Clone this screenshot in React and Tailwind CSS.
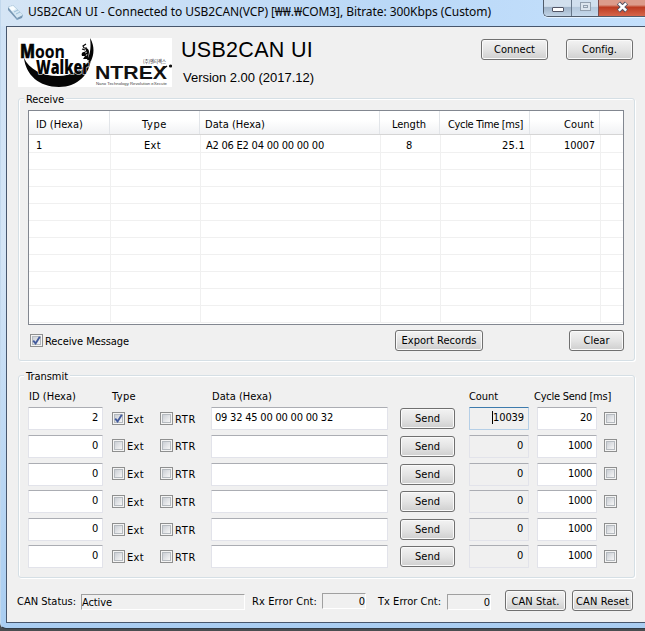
import { useLayoutEffect, useRef, useState } from "react";

// Text whose tracking is computed so that it spans `w` pixels.
function Fit({ w, children, className = "" }) {
  const ref = useRef(null);
  const [tracking, setTracking] = useState(0);
  useLayoutEffect(() => {
    const natural = ref.current.getBoundingClientRect().width;
    setTracking((w - natural) / Math.max(1, children.length));
  }, []);
  return (
    <span ref={ref} className={`inline-block whitespace-pre ${className}`} style={{ letterSpacing: `${tracking}px` }}>
      {children}
    </span>
  );
}

function Button({ label, w, className }) {
  return (
    <button
      className={`flex h-[21px] shrink-0 items-center justify-center rounded-[3px] border border-[#707070] bg-linear-to-b from-[#f3f3f3] from-0% via-[#e4e4e4] via-50% to-[#cfcfcf] to-100% pt-[2px] shadow-[inset_0_0_0_1px_#fafafa] ${className}`}
    >
      <Fit w={w}>{label}</Fit>
    </button>
  );
}

function Check({ checked = false, className = "" }) {
  return (
    <span className={`flex size-[13px] shrink-0 items-center justify-center border border-[#8e8f8f] bg-[#f4f4f4] ${className}`}>
      <span className="block size-[9px] border border-[#b5babf] bg-linear-to-br from-[#cbcfd5] to-[#f6f6f6]">
        {checked && (
          <svg viewBox="0 0 9 9" className="-mt-px -ml-px size-[9px]">
            <path d="M1.2 4.6 3.6 7.4 7.8.8" fill="none" stroke="#425a9c" strokeWidth="1.9" />
          </svg>
        )}
      </span>
    </span>
  );
}

function Field({ value = "", w = 0, className }) {
  return (
    <span className={`block h-[23px] shrink-0 rounded-[1px] border border-[#e2e3ea] border-t-[#abadb3] leading-[20px] ${className}`}>
      {value && <Fit w={w}>{value}</Fit>}
    </span>
  );
}

function Group({ title, w, className, children }) {
  return (
    <section className={`ml-[11px] w-[617px] rounded-[3px] border border-[#d5dfe5] shadow-[inset_1px_1px_0_#fff,1px_1px_0_#fff] ${className}`}>
      <div className="-mt-[8px] ml-[5px] h-[15px] w-fit bg-[#f0f0f0] pr-[2px] pl-[2px] leading-[17px]">
        <Fit w={w}>{title}</Fit>
      </div>
      {children}
    </section>
  );
}

function Logo() {
  return (
    <svg className="ml-[11px] h-[49px] w-[154px] shrink-0 bg-white" viewBox="0 0 154 49">
      <path d="M6 20C11 31 24 38 40 38 54 38 66 31 73 20 72 36 60 49 41 49 21 49 8 37 6 20Z" fill="#050505" />
      <path d="M72 0C77 8 76 17 73 23L69 22C73 15 73 7 72 0Z" fill="#050505" />
      <path d="M67 10c3 0 4 2 4 4l-1 7-5 0 2-3-3 0c-1-2 0-4 2-4l2-1Z" fill="#050505" />
      <path d="M68 6l-3 2 1 2 3 0M64 11l3 1" fill="none" stroke="#050505" strokeWidth="1.2" />
      <path d="M67 15l2-1M68 18l1-2" fill="none" stroke="#fff" strokeWidth=".7" />
      <g fontFamily="Open Sans, sans-serif" fontWeight="800" fill="#050505">
        <text x="2" y="20" fontSize="19" textLength="15" lengthAdjust="spacingAndGlyphs" stroke="#050505" strokeWidth=".5">M</text>
        <text x="17" y="20" fontSize="17" fontWeight="700" textLength="30" lengthAdjust="spacingAndGlyphs">oon</text>
        <text x="18" y="35.500" fontSize="19" stroke="#fff" strokeWidth="1.200" paintOrder="stroke" textLength="53" lengthAdjust="spacingAndGlyphs">Walker</text>
      </g>
      <text x="77" y="41" fontSize="18.500" fontFamily="Liberation Sans, sans-serif" fontWeight="700" fill="#111" textLength="72" lengthAdjust="spacingAndGlyphs">NTREX</text>
      <circle cx="152.500" cy="28" r="1.600" fill="#111" />
      <path d="M145 31 149 28" stroke="#111" strokeWidth="1.500" />
      <text x="125" y="25" fontSize="5" fontFamily="Noto Sans CJK KR, sans-serif" fill="#222" textLength="23" lengthAdjust="spacingAndGlyphs">(주)엔티렉스</text>
      <text x="78" y="46.500" fontSize="3.800" fontFamily="Liberation Sans, sans-serif" fill="#444" textLength="71" lengthAdjust="spacingAndGlyphs">Nano Technology Revolution eXecute</text>
    </svg>
  );
}

function TitleBar() {
  return (
    <header className="flex h-[26px] shrink-0 bg-linear-to-r from-[#d5e5f5] via-[#bad8f7] via-60% to-[#c4e0fc]">
      <svg className="mt-[4px] ml-[6px] size-[17px] shrink-0" viewBox="0 0 17 17">
        <path d="M1 3 6 1 16 11 15 14 10 16 1 6Z" fill="#7797b3" />
        <path d="M1 3 6 1 16 11 10 14Z" fill="#d5e7f3" />
        <path d="M2 3.500 6 2 9 5 5 7Z" fill="#f9fdff" />
        <path d="M10 14v2M7 8l4-2M9 10l4-2" stroke="#8eb5d1" strokeWidth=".8" />
      </svg>
      <h1 className="ml-[4px] h-[24px] w-[465px] shrink-0 font-['Noto_Sans','Noto_Sans_CJK_KR',sans-serif] text-[12px] leading-[23px] text-[#080808]">
        <Fit w={463}>{"USB2CAN UI - Connected to USB2CAN(VCP) [₩₩.₩COM3], Bitrate: 300Kbps (Custom)"}</Fit>
      </h1>
      <div className="ml-[50px] flex h-[17px] w-[110px] shrink-0 overflow-hidden rounded-bl-[5px] border-b border-l border-[#505c6b] shadow-[0_1px_0_#e5f2ff]">
        <span className="flex w-[28px] items-end justify-center border-r border-[#66778a] bg-linear-to-b from-[#d1dfed] from-40% via-[#9fb3c8] via-45% to-[#c1d3e5] pb-[4px]">
          <i className="block h-[5px] w-[12px] rounded-[1px] border border-[#535666] bg-white" />
        </span>
        <span className="flex w-[27px] items-center justify-center border-r border-[#7a4a4c] bg-linear-to-b from-[#d0dfee] from-40% via-[#b4c8dc] via-45% to-[#c6d9ec]">
          <i className="-mt-[3px] block h-[9px] w-[11px] border border-[#929fae] bg-[#dce5ee] p-[2px]">
            <i className="block h-[3px] w-[5px] border border-[#929fae]" />
          </i>
        </span>
        <span className="flex w-[54px] justify-center bg-linear-to-b from-[#dc9b8b] from-30% via-[#bc3a20] via-45% to-[#d6664b] pr-[7px]">
          <svg className="mt-[1px] h-[12px] w-[13px]" viewBox="0 0 13 12">
            <path d="M2.500 2 10.500 10M10.500 2 2.500 10" stroke="#535666" strokeWidth="4.500" />
            <path d="M2.800 2.300 10.200 9.700M10.200 2.300 2.800 9.700" stroke="#fff" strokeWidth="2.500" />
          </svg>
        </span>
      </div>
    </header>
  );
}

const emptyRows = Array.from({ length: 10 }, (_, i) => i);
const headCols = "grid grid-cols-[81px_90px_180px_60px_90px_70px_1fr]";
const cols = "grid grid-cols-[82px_90px_180px_60px_90px_70px_1fr] grid-rows-[100%]";

function ReceiveTable() {
  const headCell = "h-[23px] border-r border-[#e2e5e9]";
  const cell = "border-r border-b border-[#f0f0f0]";
  return (
    <div className="mt-[4px] ml-[9px] h-[215px] w-[596px] overflow-hidden border border-[#828790] bg-white">
      <div className={`h-[24px] border-b border-[#d5d5d5] bg-linear-to-b from-white from-40% to-[#f1f2f4] leading-[28px] ${headCols}`}>
        <span className={`${headCell} pl-[7px]`}><Fit w={47}>ID (Hexa)</Fit></span>
        <span className={`${headCell} pl-[32px]`}><Fit w={25}>Type</Fit></span>
        <span className={`${headCell} pl-[5px]`}><Fit w={60}>Data (Hexa)</Fit></span>
        <span className={`${headCell} pl-[12px]`}><Fit w={34}>Length</Fit></span>
        <span className={`${headCell} pl-[8px]`}><Fit w={75}>Cycle Time [ms]</Fit></span>
        <span className={`${headCell} pl-[34px]`}><Fit w={30}>Count</Fit></span>
        <span />
      </div>
      <div className={`h-[18px] leading-[22px] ${cols}`}>
        <span className={`${cell} pl-[7px]`}>1</span>
        <span className={`${cell} pl-[33px]`}><Fit w={17}>Ext</Fit></span>
        <span className={`${cell} pl-[5px]`}><Fit w={118}>A2 06 E2 04 00 00 00 00</Fit></span>
        <span className={`${cell} pl-[25px]`}>8</span>
        <span className={`${cell} pl-[61px]`}><Fit w={23}>25.1</Fit></span>
        <span className={`${cell} pl-[33px]`}><Fit w={31}>10007</Fit></span>
        <span className="border-b border-[#f0f0f0]" />
      </div>
      {emptyRows.map((i) => (
        <div key={i} className={`h-[17px] ${cols}`}>
          <span className={cell} /><span className={cell} /><span className={cell} />
          <span className={cell} /><span className={cell} /><span className={cell} />
          <span className="border-b border-[#f0f0f0]" />
        </div>
      ))}
    </div>
  );
}

const rows = [
  { id: "2", ext: true, data: "09 32 45 00 00 00 00 32", count: "10039", cycle: "20", height: "h-[28px]" },
  { id: "0", count: "0", cycle: "1000", height: "h-[28px]" },
  { id: "0", count: "0", cycle: "1000", height: "h-[27px]" },
  { id: "0", count: "0", cycle: "1000", height: "h-[28px]" },
  { id: "0", count: "0", cycle: "1000", height: "h-[27px]" },
  { id: "0", count: "0", cycle: "1000", height: "h-[27px]" },
];

function TransmitRow({ row, index }) {
  const checkTop = index === 0 || index > 2;
  return (
    <div className={`flex items-start pl-[9px] ${row.height}`}>
      <Field value={row.id} w={7} className="w-[75px] bg-white pr-[3px] text-right" />
      <div className={`ml-[9px] flex items-center ${checkTop ? "mt-[5px]" : "mt-[4px]"}`}>
        <Check checked={row.ext} />
        <span className="ml-[2px] h-[13px] w-[33px] leading-[16px]"><Fit w={17}>Ext</Fit></span>
        <Check />
        <span className="ml-[2px] h-[13px] w-[36px] leading-[16px]"><Fit w={21}>RTR</Fit></span>
      </div>
      <Field value={row.data} w={118} className="w-[177px] bg-white pl-[3px]" />
      <Button label="Send" w={25} className="mt-px ml-[12px] w-[55px]" />
      <Field
        value={row.count}
        w={row.count.length * 6 + 1}
        className={`ml-[14px] w-[60px] pr-[4px] text-right ${index === 0 ? "border-[#b5cfe7]! border-t-[#3d7bad]! [&>span]:shadow-[-1px_0_0_#000] [&>span]:h-[13px] [&>span]:leading-[13px] [&>span]:mt-[3px]" : ""}`}
      />
      <Field value={row.cycle} w={row.cycle.length * 6} className="ml-[8px] w-[60px] bg-white pr-[4px] text-right" />
      <Check className={checkTop ? "mt-[5px] ml-[7px]" : "mt-[4px] ml-[7px]"} />
    </div>
  );
}

function StatusField({ children, className }) {
  return (
    <span className={`block h-[16px] border border-white border-t-[#a0a0a0] border-l-[#a0a0a0] leading-[16px] ${className}`}>
      {children}
    </span>
  );
}

export default function App() {
  return (
    <div className="h-[631px] w-[645px] overflow-hidden bg-[#4a4d50] font-['DejaVu_Sans_Condensed','DejaVu_Sans',sans-serif] text-[11px] text-black">
      <div className="flex h-[629px] flex-col overflow-hidden rounded-bl-[6px] border-b border-l border-[#303b46] border-l-[#c2d8ed] bg-linear-to-b from-[#cfe2f6] via-[#d4e5f6] via-40% to-[#a9cdf1]">
        <TitleBar />
        <main className="ml-[5px] h-[597px] shrink-0 border-y border-l border-[#47566c] bg-[#f0f0f0]">
          <div className="flex h-[71px] pt-[11px]">
            <Logo />
            <div className="ml-[9px] w-[300px] font-['Liberation_Sans',sans-serif]">
              <h2 className="h-[28px] text-[21.500px] leading-[24px]"><Fit w={132}>USB2CAN UI</Fit></h2>
              <p className="ml-[2px] h-[20px] text-[13px] leading-[23px]"><Fit w={131}>Version 2.00 (2017.12)</Fit></p>
            </div>
            <Button label="Connect" w={41} className="mt-[1px] w-[67px]" />
            <Button label="Config." w={35} className="mt-[1px] ml-[18px] w-[67px]" />
          </div>
          <Group title="Receive" w={38} className="h-[263px]">
            <ReceiveTable />
            <div className="mt-[5px] flex h-[21px] pl-[11px]">
              <Check checked className="mt-[4px]" />
              <span className="ml-[2px] w-[350px] leading-[24px]"><Fit w={84}>Receive Message</Fit></span>
              <Button label="Export Records" w={75} className="w-[88px]" />
              <Button label="Clear" w={26} className="ml-[86px] w-[55px]" />
            </div>
          </Group>
          <Group title="Transmit" w={42} className="mt-[14px] h-[203px]">
            <div className="flex h-[24px] pl-[10px] leading-[27px]">
              <span className="w-[83px]"><Fit w={47}>ID (Hexa)</Fit></span>
              <span className="w-[100px]"><Fit w={24}>Type</Fit></span>
              <span className="w-[257px]"><Fit w={60}>Data (Hexa)</Fit></span>
              <span className="w-[65px]"><Fit w={29}>Count</Fit></span>
              <span><Fit w={77}>Cycle Send [ms]</Fit></span>
            </div>
            {rows.map((row, i) => <TransmitRow key={i} row={row} index={i} />)}
          </Group>
          <footer className="mt-[12px] flex h-[22px] pl-[10px] leading-[23px]">
            <span className="w-[64px]"><Fit w={59}>CAN Status:</Fit></span>
            <StatusField className="mt-[4px] w-[164px]"><Fit w={30}>Active</Fit></StatusField>
            <span className="ml-[7px] w-[70px]"><Fit w={65}>Rx Error Cnt:</Fit></span>
            <StatusField className="mt-[3px] w-[44px] text-right">0</StatusField>
            <span className="ml-[12px] w-[69px]"><Fit w={63}>Tx Error Cnt:</Fit></span>
            <StatusField className="mt-[4px] w-[44px] text-right">0</StatusField>
            <Button label="CAN Stat." w={48} className="ml-[14px] w-[61px]" />
            <Button label="CAN Reset" w={53} className="ml-[6px] w-[61px]" />
          </footer>
        </main>
      </div>
    </div>
  );
}
